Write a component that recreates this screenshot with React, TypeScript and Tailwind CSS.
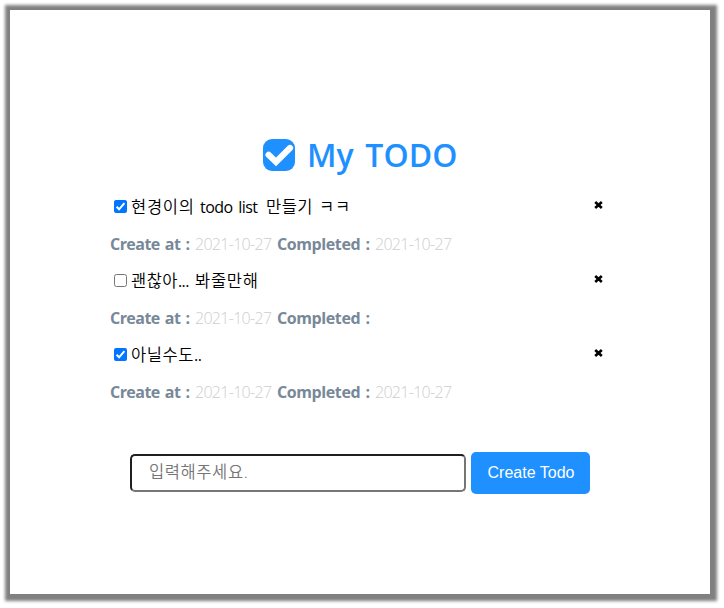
import { useState } from 'react';

type Run = { text: string; className: string };
type Todo = { id: number; runs: Run[]; done: boolean; created: string; completed: string };

const initial: Todo[] = [
  {
    id: 1,
    runs: [
      { text: '현경이의', className: 'w-[69px] tracking-[0.7px]' },
      { text: 'todo list', className: 'w-[66px] text-[16px] font-normal tracking-[-0.55px] [word-spacing:2px]' },
      { text: '만들기', className: 'w-[53px] tracking-[0.5px]' },
      { text: 'ㅋㅋ', className: 'w-[40px] tracking-[0.8px]' },
    ],
    done: true,
    created: '2021-10-27',
    completed: '2021-10-27',
  },
  {
    id: 2,
    runs: [
      { text: '괜찮아', className: 'w-[47px] tracking-[0.5px]' },
      { text: '...', className: 'w-[17px] text-[16px] font-normal tracking-[-0.6px]' },
      { text: '봐줄만해', className: 'w-[70px] tracking-[0.7px]' },
    ],
    done: false,
    created: '2021-10-27',
    completed: '',
  },
  {
    id: 3,
    runs: [
      { text: '아닐수도', className: 'w-[63px] tracking-[0.6px]' },
      { text: '..', className: 'w-[17px] text-[16px] font-normal tracking-[-0.4px]' },
    ],
    done: true,
    created: '2021-10-27',
    completed: '2021-10-27',
  },
];

function Logo() {
  return (
    <svg className="h-8 w-8 shrink-0" viewBox="0 0 32 32">
      <rect width="32" height="32" rx="9" fill="#1e90ff" />
      <path
        d="M5.6 15.8 L13 23 L27 9"
        fill="none"
        stroke="#fff"
        strokeWidth="6.2"
        strokeLinecap="round"
      />
    </svg>
  );
}

function CheckBox({ checked, onToggle }: { checked: boolean; onToggle: () => void }) {
  return (
    <button onClick={onToggle} className="mr-[3px] block h-[13px] w-[13px] shrink-0">
      <svg viewBox="0 0 13 13" className="block h-[13px] w-[13px]">
        {checked ? (
          <>
            <rect width="13" height="13" rx="2" fill="#0075ff" />
            <path d="M2.6 6.7 L5.1 9.3 L10.4 3.1" fill="none" stroke="#fff" strokeWidth="2" />
          </>
        ) : (
          <rect x=".5" y=".5" width="12" height="12" rx="2" fill="#fff" stroke="#767676" />
        )}
      </svg>
    </button>
  );
}

function Cross() {
  return (
    <svg viewBox="0 0 9 8" className="h-2 w-[9px]">
      <path d="M1.2 1 L7.8 7 M7.8 1 L1.2 7" stroke="#000" strokeWidth="2.6" />
    </svg>
  );
}

const label = 'font-bold text-[#778899]';
const createLabel = 'w-[85px] tracking-[-0.55px] [word-spacing:1.5px]';
const completedLabel = 'w-[98px] tracking-[-0.4px] [word-spacing:1.5px]';
const date = 'font-light text-[#cdcdcd] tracking-[-0.7px]';

export default function App() {
  const [todos, setTodos] = useState(initial);
  const toggle = (id: number) =>
    setTodos((list) => list.map((t) => (t.id === id ? { ...t, done: !t.done } : t)));
  const remove = (id: number) => setTodos((list) => list.filter((t) => t.id !== id));

  return (
    <div className="h-[608px] w-[724px] bg-white pt-[10px] pl-[10px] font-['Open_Sans','Noto_Sans_CJK_KR',sans-serif] text-black">
      <main className="h-[584px] w-[700px] bg-white px-[100px] pt-[124px] shadow-[1px_1px_3px_6px_#808080]">
        <h1 className="flex h-[42px] items-center pl-[153px]">
          <Logo />
          <span className="ml-3 text-[32px] leading-[42px] font-semibold tracking-[0.1px] [word-spacing:3px] whitespace-nowrap text-[#1e90ff]">
            My TODO
          </span>
        </h1>
        <ul className="mt-[12px]">
          {todos.map((t) => (
            <li key={t.id} className="h-[74px]">
              <div className="flex h-[37px] items-center pl-1">
                <CheckBox checked={t.done} onToggle={() => toggle(t.id)} />
                <p className="flex items-baseline pl-px text-[16.5px] leading-6 font-[350]">
                  {t.runs.map((r) => (
                    <span key={r.text} className={`${r.className} whitespace-nowrap`}>
                      {r.text}
                    </span>
                  ))}
                </p>
                <button onClick={() => remove(t.id)} className="mr-[7px] mb-[3px] ml-auto flex">
                  <Cross />
                </button>
              </div>
              <div className="flex h-[37px] items-center text-[16px] whitespace-nowrap">
                <span className={`${label} ${createLabel}`}>Create at :</span>
                <span className={`${date} w-[82px]`}>{t.created}</span>
                <span className={`${label} ${completedLabel}`}>Completed :</span>
                <span className={date}>{t.completed}</span>
              </div>
            </li>
          ))}
        </ul>
        <form className="mt-[42px] flex h-[42px] items-center pl-5" onSubmit={(e) => e.preventDefault()}>
          <input
            placeholder="입력해주세요."
            className="h-[38px] w-[336px] rounded-[5px] border-2 border-t-[#1f1f1f] border-r-[#767676] border-b-[#767676] border-l-[#1f1f1f] px-[17px] pb-[3px] text-[16.5px] font-[350] tracking-[0.6px] placeholder:text-[#757575]"
          />
          <button className="ml-[5px] h-[42px] w-[119px] rounded-[5px] bg-[#1e90ff] pl-px font-['Liberation_Sans',sans-serif] text-[16px] text-white">
            Create Todo
          </button>
        </form>
      </main>
    </div>
  );
}
